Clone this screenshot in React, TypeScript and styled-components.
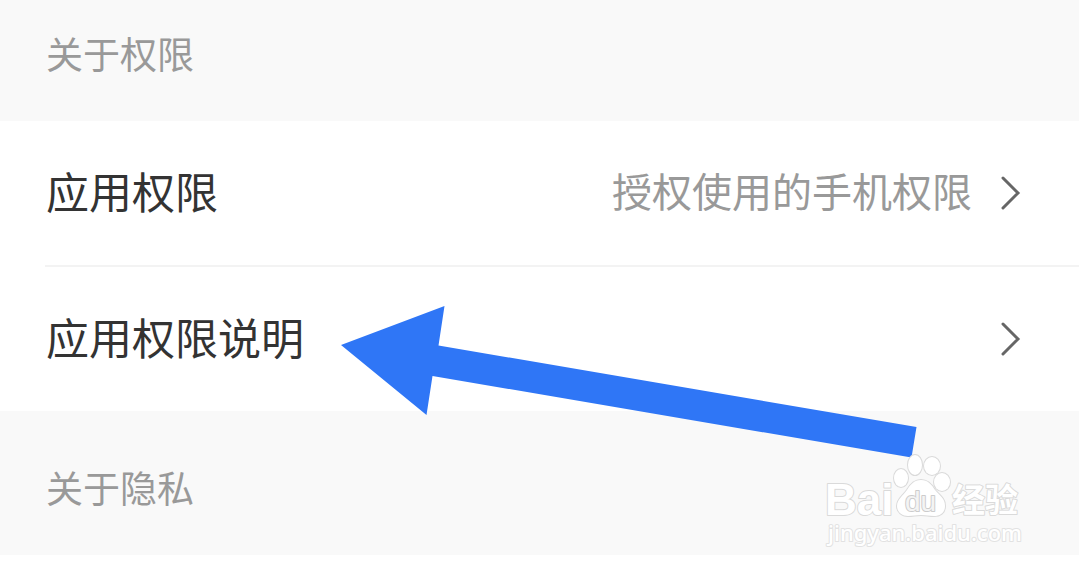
import React from "react";
import styled, { createGlobalStyle } from "styled-components";

const GlobalStyle = createGlobalStyle`
  body {
    margin: 0;
    background: #ffffff;
    font-family: "Noto Sans CJK SC", "Noto Sans", sans-serif;
  }
`;

const Page = styled.main`
  position: relative;
  overflow: hidden;
`;

const SectionHeader = styled.header<{ $first?: boolean }>`
  position: relative;
  display: flex;
  align-items: center;
  padding: ${(p) => (p.$first ? "25px 46px 40px" : "48px 46px 40px")};
  background: #f9f9f9;
`;

const SectionTitle = styled.h2`
  margin: 0;
  font-size: 37px;
  line-height: 56px;
  font-weight: 400;
  color: #999999;
`;

const List = styled.ul`
  list-style: none;
  margin: 0;
  padding: 0 0 0 45px;
`;

const Item = styled.li`
  & + & {
    border-top: 2px solid #f3f3f3;
  }
`;

const RowLink = styled.a`
  display: flex;
  align-items: center;
  gap: 28px;
  padding: 40px 57px 40px 1px;
  color: #333333;
  text-decoration: none;
`;

const Label = styled.span`
  flex: 1;
  padding-bottom: 6px;
  font-size: 43px;
  line-height: 58px;
`;

const Value = styled.span`
  padding-bottom: 6px;
  font-size: 40px;
  line-height: 58px;
  color: #999999;
`;

const ChevronIcon = styled.svg`
  flex: none;
  width: 22px;
  height: 36px;
  fill: none;
  stroke: #666666;
  stroke-width: 3;
  stroke-linecap: round;
`;

const PointerArrow = styled.svg`
  position: absolute;
  left: 341px;
  top: 306px;
  width: 576px;
  height: 152px;
  fill: #2f76f6;
  pointer-events: none;
`;

const Watermark = styled.svg`
  position: absolute;
  right: 54px;
  bottom: 5px;
  width: 200px;
  height: 100px;
  z-index: 1;
  fill: #ffffff;
  stroke: #dadada;
  stroke-width: 2;
  stroke-linejoin: round;
  paint-order: stroke;

  text {
    font-family: "Liberation Sans", "Noto Sans CJK SC", sans-serif;
    font-weight: 700;
  }
  .du {
    font-weight: 400;
    fill: #f4f4f4;
    stroke: #cccccc;
  }
  .site {
    font-family: "Noto Sans", sans-serif;
    font-weight: 500;
    stroke: #e2e2e2;
  }
`;

const Chevron = () => (
  <ChevronIcon viewBox="0 0 22 36" aria-hidden="true">
    <path d="M3 3 L18 18 L3 33" />
  </ChevronIcon>
);

const Row = ({ label, value }: { label: string; value?: string }) => (
  <Item>
    <RowLink href="#">
      <Label>{label}</Label>
      {value && <Value>{value}</Value>}
      <Chevron />
    </RowLink>
  </Item>
);

export default function App() {
  return (
    <Page>
      <GlobalStyle />
      <SectionHeader $first>
        <SectionTitle>关于权限</SectionTitle>
      </SectionHeader>
      <List>
        <Row label="应用权限" value="授权使用的手机权限" />
        <Row label="应用权限说明" />
      </List>
      <SectionHeader>
        <SectionTitle>关于隐私</SectionTitle>
        <Watermark viewBox="0 0 200 100" aria-label="Baidu 经验">
          <text x="0" y="65" fontSize="44">Bai</text>
          <ellipse cx="76" cy="28" rx="7" ry="9" />
          <ellipse cx="90" cy="15" rx="7" ry="10" />
          <ellipse cx="107" cy="16" rx="8" ry="9" />
          <ellipse cx="117" cy="32" rx="8" ry="9" />
          <path d="M96 30 C103 30 107 35 110 40 C114 45 120 48 120 56 C120 63 115 66 109 66 C104 66 101 65 96 65 C91 65 88 66 83 66 C77 66 72 62 72 56 C72 49 78 46 82 40 C85 35 89 30 96 30 Z" />
          <text className="du" x="80" y="61" fontSize="28">du</text>
          <text x="127" y="62" fontSize="33">经验</text>
          <text className="site" x="3" y="91" fontSize="22">jingyan.baidu.com</text>
        </Watermark>
      </SectionHeader>
      <PointerArrow viewBox="0 0 576 152" aria-hidden="true">
        <path d="M0 39 L103.5 0 L97.5 39.5 L575.5 121 L570.5 151.5 L91.5 70 L85.5 109 Z" />
      </PointerArrow>
    </Page>
  );
}
